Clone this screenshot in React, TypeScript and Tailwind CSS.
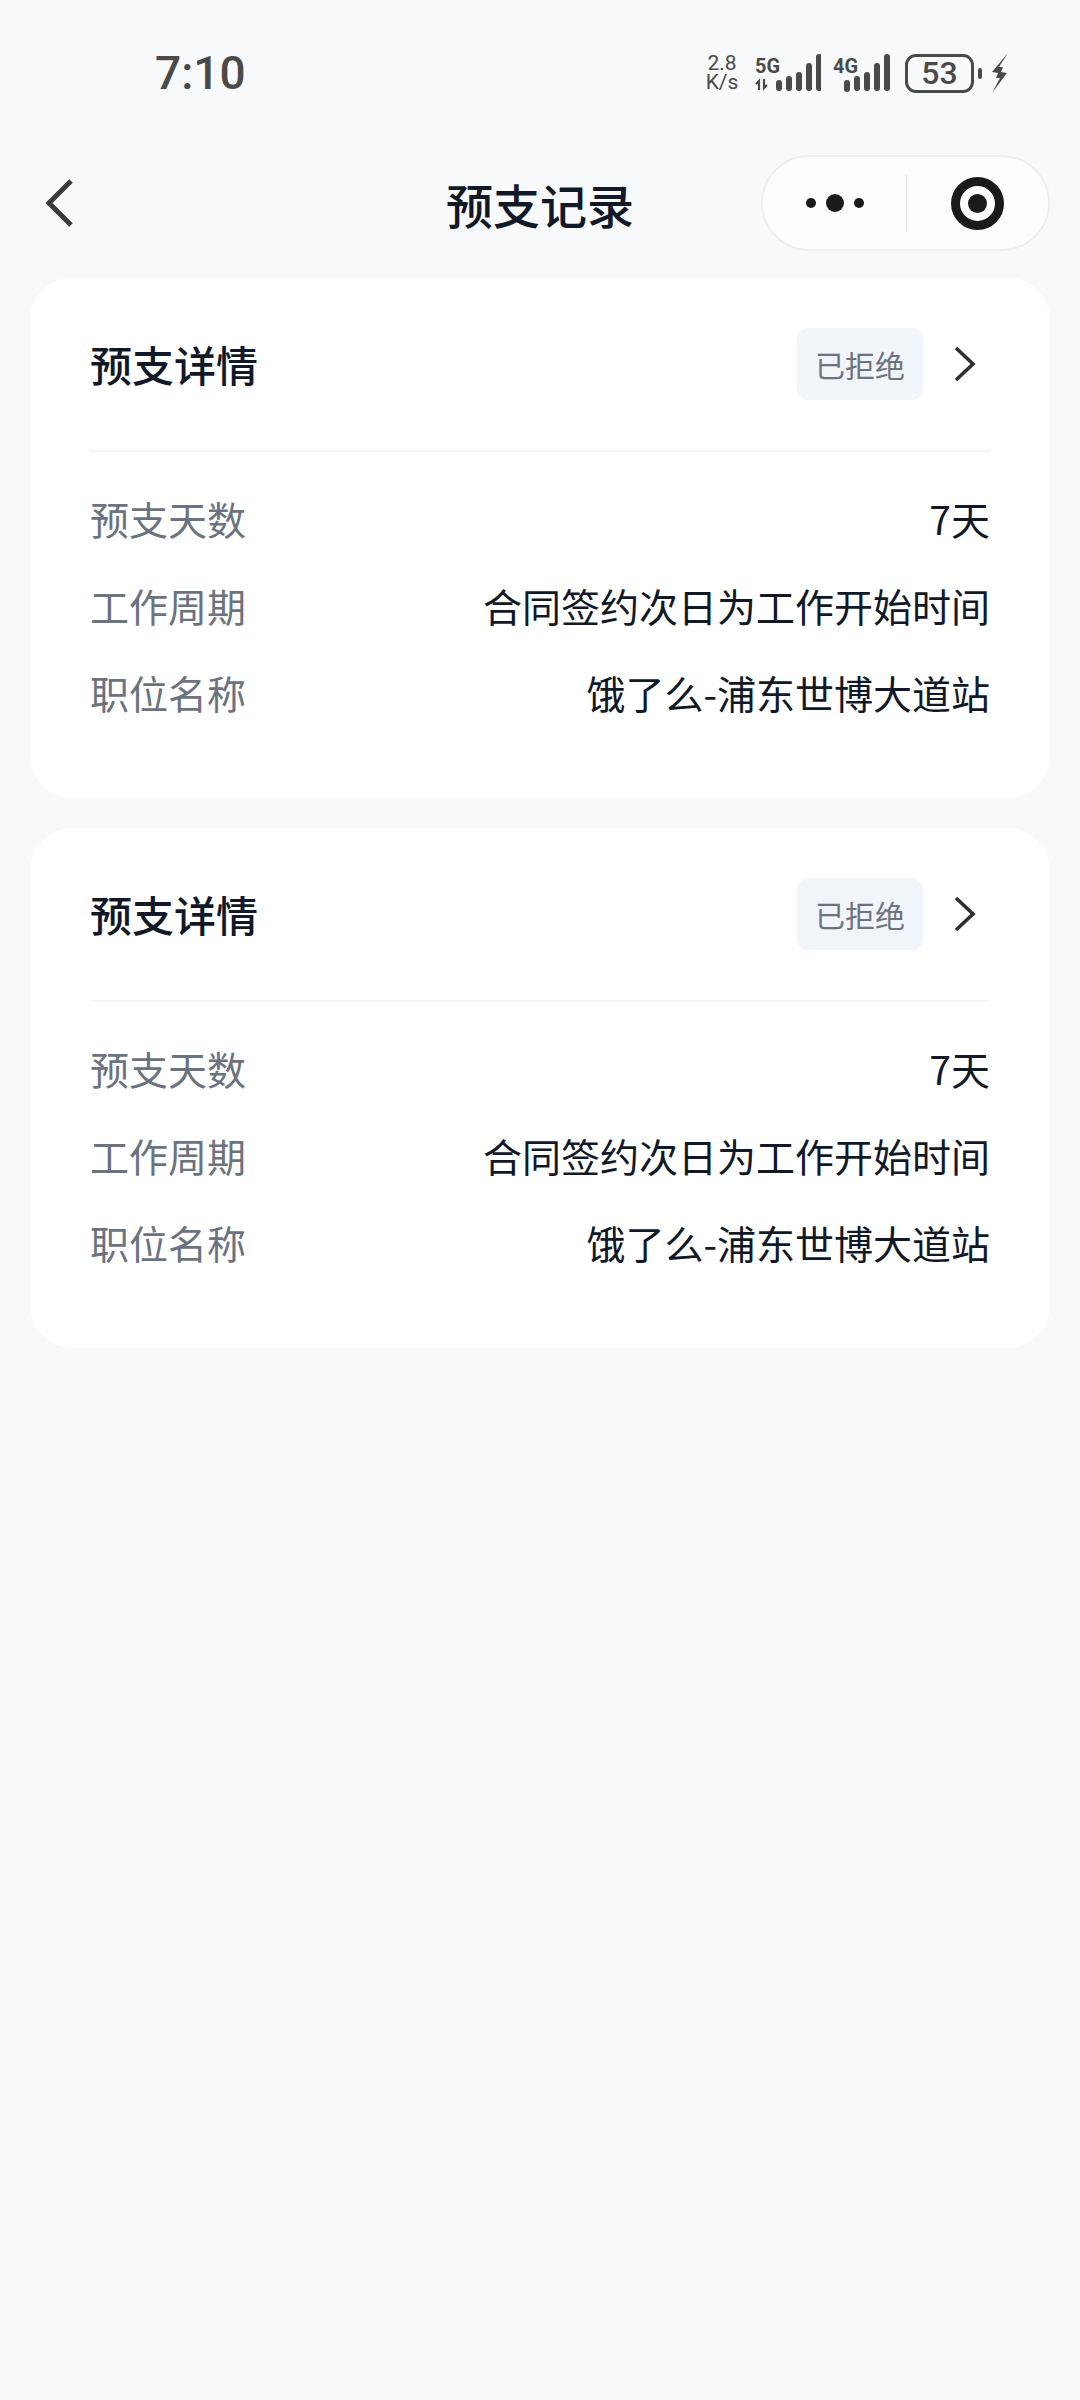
import React from 'react';

const rows = [
  { label: '预支天数', value: '7天' },
  { label: '工作周期', value: '合同签约次日为工作开始时间' },
  { label: '职位名称', value: '饿了么-浦东世博大道站' },
];

const SignalIcon = ({ label, arrows }: { label: string; arrows?: boolean }) => (
  <svg width="66" height="40" viewBox="0 0 66 40" fill="#4a4a4a">
    <text x="0" y="20" fontSize="20" fontWeight="700" fontFamily="Roboto, sans-serif" textLength="25" lengthAdjust="spacingAndGlyphs">
      {label}
    </text>
    {arrows && <path d="M4 37v-9l-3 3M9 26v9l3-3" fill="none" stroke="#4a4a4a" strokeWidth="2.2" />}
    <rect x={arrows ? 21 : 11} y="27" width="6" height={arrows ? 11 : 12} rx="3" />
    <rect x={arrows ? 31 : 21} y="23" width="6" height="15" rx="3" />
    <rect x={arrows ? 41 : 31} y="19" width="6" height="19" rx="3" />
    <rect x={arrows ? 51 : 41} y="10" width="6" height="28" rx="3" />
    <rect x={arrows ? 61 : 51} y="1" width="6" height="37" rx="3" />
  </svg>
);

const StatusBar = () => (
  <div className="h-[146px] flex items-center justify-between pl-[155px] pr-[70px] text-[#4a4a4a] font-['Roboto',sans-serif]">
    <span className="text-[46px] font-medium leading-none">7:10</span>
    <div className="flex items-center">
      <div className="w-[40px] text-center text-[21px] leading-[19px]">
        <div>2.8</div>
        <div>K/s</div>
      </div>
      <div className="ml-[13px]">
        <SignalIcon label="5G" arrows />
      </div>
      <div className="ml-[12px]">
        <SignalIcon label="4G" />
      </div>
      <div className="ml-[6px] w-[69px] h-[39px] rounded-[11px] border-[3px] border-[#4a4a4a] flex items-center justify-center text-[32px] font-medium leading-none">
        53
      </div>
      <div className="ml-[4px] w-[4px] h-[11px] rounded-full bg-[#4a4a4a]" />
      <svg className="ml-[8px]" width="20" height="40" viewBox="0 0 20 40" fill="#4a4a4a">
        <path d="M18 0 2 19l6 1-2 5 4 0-8 15 15-20-6-1 2-5-4 0z" />
      </svg>
    </div>
  </div>
);

const NavBar = () => (
  <div className="h-[114px] px-[30px] grid grid-cols-[1fr_auto_1fr] items-center">
    <svg className="ml-[13px]" width="32" height="50" viewBox="0 0 32 50" fill="none" stroke="#3a3a3a" strokeWidth="5">
      <path d="M28 3 6 25l22 22" />
    </svg>
    <h1 className="text-[47px] font-medium text-[#111827] leading-none">预支记录</h1>
    <div className="justify-self-end w-[289px] h-[96px] rounded-full bg-[#fdfdfd] border-2 border-[#eceef0] flex items-center">
      <div className="w-[143px] flex items-center justify-center gap-[10px]">
        <span className="w-[10px] h-[10px] rounded-full bg-[#1a1a1a]" />
        <span className="w-[18px] h-[18px] rounded-full bg-[#1a1a1a]" />
        <span className="w-[10px] h-[10px] rounded-full bg-[#1a1a1a]" />
      </div>
      <div className="w-[1px] h-[57px] bg-[#e5e6e8]" />
      <div className="flex-1 flex items-center justify-center">
        <div className="w-[53px] h-[53px] rounded-full border-[9px] border-[#1a1a1a] flex items-center justify-center">
          <span className="w-[19px] h-[19px] rounded-full bg-[#1a1a1a]" />
        </div>
      </div>
    </div>
  </div>
);

const AdvanceCard = () => (
  <div className="bg-white rounded-[42px] h-[520px] px-[60px]">
    <div className="h-[174px] flex items-center justify-between border-b-2 border-[#f3f4f6]">
      <span className="text-[42px] font-medium text-[#111827] leading-none">预支详情</span>
      <div className="flex items-center">
        <span className="w-[126px] h-[72px] rounded-[12px] bg-[#f1f4f9] flex items-center justify-center text-[30px] text-[#6b7280]">
          已拒绝
        </span>
        <svg className="ml-[30px] mr-[13px]" width="24" height="36" viewBox="0 0 24 36" fill="none" stroke="#2f2f2f" strokeWidth="3.6">
          <path d="M3 2l17 16L3 34" />
        </svg>
      </div>
    </div>
    <div className="pt-[23px] flex flex-col">
      {rows.map((row) => (
        <div key={row.label} className="h-[87px] flex items-center justify-between text-[39px] leading-none">
          <span className="text-[#6b7280]">{row.label}</span>
          <span className="text-[#111827]">{row.value}</span>
        </div>
      ))}
    </div>
  </div>
);

const App = () => (
  <div className="min-h-[2400px] bg-[#f8f9fb] font-['Noto_Sans_CJK_SC','Noto_Sans',sans-serif]">
    <StatusBar />
    <NavBar />
    <div className="pt-[18px] px-[30px] flex flex-col gap-[30px]">
      <AdvanceCard />
      <AdvanceCard />
    </div>
  </div>
);

export default App;
